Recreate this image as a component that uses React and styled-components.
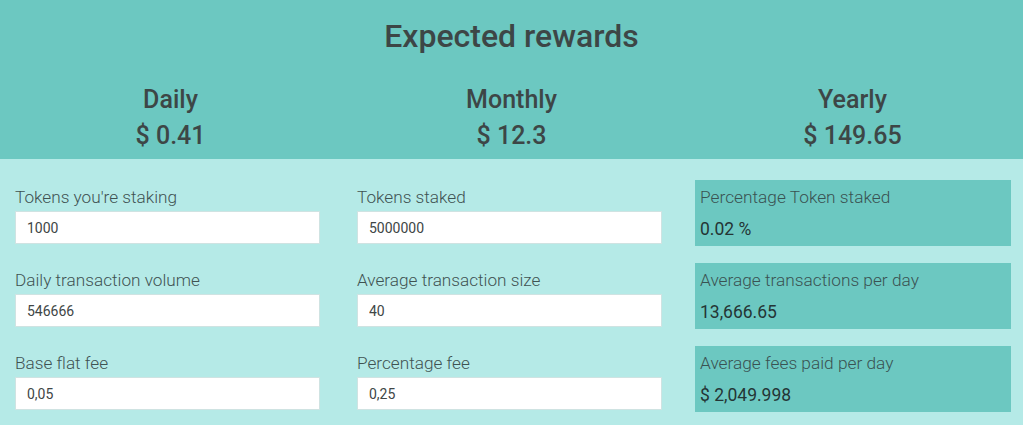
import styled, { createGlobalStyle } from "styled-components";

const GlobalStyle = createGlobalStyle`
  body {
    margin: 0;
    font-family: Roboto, "Noto Sans", sans-serif;
    background: #b5eae7;
  }
`;

const Header = styled.header`
  background: #6cc8c1;
  height: 159px;
  box-sizing: border-box;
  padding-top: 16px;
  color: #3d4646;
  text-align: center;
`;

const Title = styled.h1`
  margin: 0;
  font-size: 32px;
  font-weight: 500;
  line-height: 40px;
`;

const Periods = styled.div`
  display: grid;
  grid-template-columns: repeat(3, 1fr);
  margin-top: 26px;
`;

const Period = styled.div`
  font-size: 25px;
  font-weight: 500;
  line-height: 36px;
`;

const Body = styled.main`
  display: grid;
  grid-template-columns: repeat(3, 1fr);
  padding-top: 21px;
`;

const Column = styled.div`
  display: flex;
  flex-direction: column;
  gap: 17px;
  padding-left: ${(p) => p.$left}px;
  padding-right: ${(p) => p.$right}px;
`;

const Field = styled.div`
  display: flex;
  flex-direction: column;
  height: 66px;
`;

const Label = styled.label`
  font-size: 17.2px;
  font-weight: 300;
  color: #3f5252;
  line-height: 22px;
  padding: 6px 0 3px;
`;

const Input = styled.input`
  box-sizing: border-box;
  height: 33px;
  width: 100%;
  border: 1px solid #cfe3e2;
  background: #fff;
  padding: 0 11px;
  font-family: inherit;
  font-size: 14px;
  color: #404646;
  outline: none;
`;

const Result = styled.div`
  background: #6cc8c1;
  height: 66px;
  box-sizing: border-box;
  padding: 6px 5px;
`;

const ResultLabel = styled.div`
  font-size: 17.3px;
  font-weight: 300;
  color: #3a5252;
  line-height: 22px;
`;

const ResultValue = styled.div`
  font-size: 17.5px;
  color: #243535;
  line-height: 22px;
  margin-top: 10px;
`;

const periods = [
  ["Daily", "$ 0.41"],
  ["Monthly", "$ 12.3"],
  ["Yearly", "$ 149.65"],
];

const left = [
  ["Tokens you're staking", "1000"],
  ["Daily transaction volume", "546666"],
  ["Base flat fee", "0,05"],
];

const middle = [
  ["Tokens staked", "5000000"],
  ["Average transaction size", "40"],
  ["Percentage fee", "0,25"],
];

const results = [
  ["Percentage Token staked", "0.02 %"],
  ["Average transactions per day", "13,666.65"],
  ["Average fees paid per day", "$ 2,049.998"],
];

function App() {
  return (
    <>
      <GlobalStyle />
      <Header>
        <Title>Expected rewards</Title>
        <Periods>
          {periods.map(([name, value]) => (
            <Period key={name}>
              <div>{name}</div>
              <div>{value}</div>
            </Period>
          ))}
        </Periods>
      </Header>
      <Body>
        <Column $left={15} $right={21}>
          {left.map(([label, value]) => (
            <Field key={label}>
              <Label>{label}</Label>
              <Input defaultValue={value} />
            </Field>
          ))}
        </Column>
        <Column $left={16} $right={20}>
          {middle.map(([label, value]) => (
            <Field key={label}>
              <Label>{label}</Label>
              <Input defaultValue={value} />
            </Field>
          ))}
        </Column>
        <Column $left={13} $right={12}>
          {results.map(([label, value]) => (
            <Result key={label}>
              <ResultLabel>{label}</ResultLabel>
              <ResultValue>{value}</ResultValue>
            </Result>
          ))}
        </Column>
      </Body>
    </>
  );
}

export default App;
